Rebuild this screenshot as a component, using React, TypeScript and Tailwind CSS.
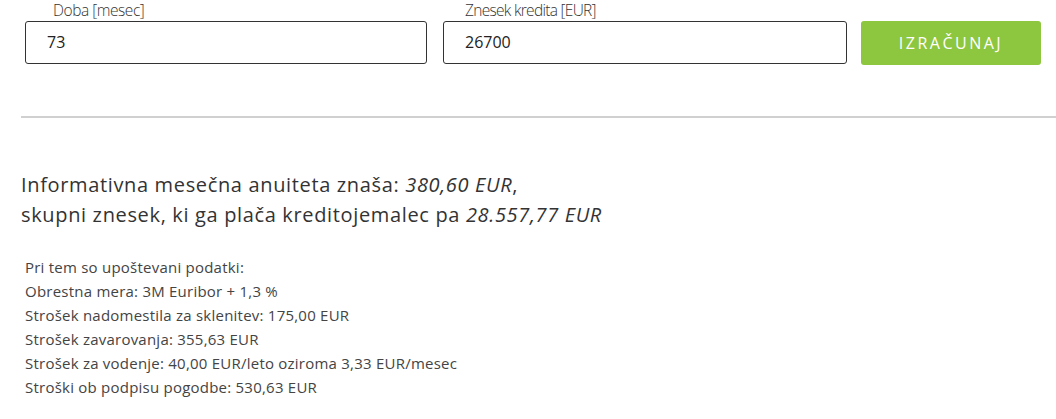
export default function App() {
  const details = [
    "Pri tem so upoštevani podatki:",
    "Obrestna mera: 3M Euribor + 1,3 %",
    "Strošek nadomestila za sklenitev: 175,00 EUR",
    "Strošek zavarovanja: 355,63 EUR",
    "Strošek za vodenje: 40,00 EUR/leto oziroma 3,33 EUR/mesec",
    "Stroški ob podpisu pogodbe: 530,63 EUR",
  ]

  return (
    <div className="w-[1056px] h-[419px] overflow-hidden bg-white font-['Open_Sans',sans-serif] text-[#333]">
      {/* Calculator form */}
      <div className="flex items-start pl-[25px]">
        <div className="w-[402px]">
          <div className="h-[21px] pl-[28px] text-[15.5px] leading-[21px] font-light tracking-[-0.45px] text-[#333]">Doba [mesec]</div>
          <div className="h-[43px] w-[402px] rounded-[3px] border border-[#333] pl-[21px] text-[16px] leading-[41px] text-[#222]">
            73
          </div>
        </div>
        <div className="ml-[16px] w-[404px]">
          <div className="h-[21px] pl-[22px] text-[15.5px] leading-[21px] font-light tracking-[-0.7px] text-[#333]">Znesek kredita [EUR]</div>
          <div className="h-[43px] w-[404px] rounded-[3px] border border-[#333] pl-[21px] text-[16px] leading-[41px] text-[#222]">
            26700
          </div>
        </div>
        <button className="ml-[14px] mt-[21px] h-[44px] w-[180px] rounded-[3px] bg-[#8dc63f] text-[16px] tracking-[2.5px] text-white">
          IZRAČUNAJ
        </button>
      </div>

      <div className="ml-[21px] mt-[51px] h-[2px] bg-[#d0d0d0]" />

      {/* Result */}
      <div className="pl-[21px] pt-[52px] text-[20px] leading-[30px] tracking-[0.65px] text-[#333]">
        <p>
          Informativna mesečna anuiteta znaša: <em>380,60 EUR</em>,
        </p>
        <p>
          skupni znesek, ki ga plača kreditojemalec pa <em>28.557,77 EUR</em>
        </p>
      </div>

      <div className="pl-[25px] pt-[25px] text-[15px] leading-[24px] tracking-[0.23px] text-[#444]">
        {details.map((line) => (
          <div key={line}>{line}</div>
        ))}
      </div>
    </div>
  )
}
